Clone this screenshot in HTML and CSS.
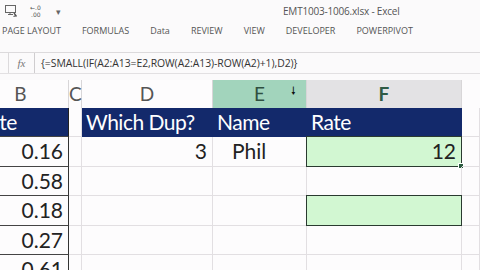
FILE: index.html
```html
<!DOCTYPE html>
<html lang="en">
<head>
  <meta charset="UTF-8" />
  <title>EMT1003-1006.xlsx - Excel</title>
  <link rel="stylesheet" href="styles.css">
</head>
<body>
  <div class="titlebar">
    <div class="quick">
      <svg class="qicon" width="16" height="14" viewBox="0 0 16 14">
        <rect x="1.5" y="1.5" width="10" height="7" fill="none" stroke="#666" stroke-width="1"/>
        <path d="M6 8.5v2M4 10.5h5" stroke="#666" stroke-width="1"/>
        <path d="M10 9l2.5 3.5M9.5 12.5l3-1" stroke="#555" stroke-width="1.3"/>
      </svg>
      <svg class="qicon" width="16" height="14" viewBox="0 0 16 14">
        <text x="2" y="6" font-size="6" font-family="DejaVu Sans" fill="#555">←.0</text>
        <text x="3" y="13" font-size="6" font-family="DejaVu Sans" fill="#555">.00</text>
      </svg>
      <span class="caret">▾</span>
    </div>
    <div class="title">EMT1003-1006.xlsx - Excel</div>
  </div>

  <div class="tabs">
    <span>PAGE LAYOUT</span>
    <span>FORMULAS</span>
    <span>Data</span>
    <span>REVIEW</span>
    <span>VIEW</span>
    <span>DEVELOPER</span>
    <span>POWERPIVOT</span>
  </div>

  <div class="formulabar">
    <div class="namebox"></div>
    <div class="fx">fx</div>
    <div class="formula">{=SMALL(IF(A2:A13=E2,ROW(A2:A13)-ROW(A2)+1),D2)}</div>
  </div>

  <div class="sheet">
    <div class="colhead">B</div>
    <div class="colhead">C</div>
    <div class="colhead">D</div>
    <div class="colhead active">E<span class="cursor">🠗</span></div>
    <div class="colhead sel">F</div>
    <div class="colhead last"></div>

    <div class="cell th tb">Rate</div>
    <div class="cell gap"></div>
    <div class="cell th">Which Dup?</div>
    <div class="cell th">Name</div>
    <div class="cell th">Rate</div>
    <div class="cell"></div>

    <div class="cell num tb">0.16</div>
    <div class="cell gap"></div>
    <div class="cell num">3</div>
    <div class="cell name">Phil</div>
    <div class="cell num green">12<span class="handle"></span></div>
    <div class="cell"></div>

    <div class="cell num tb">0.58</div>
    <div class="cell gap"></div>
    <div class="cell"></div>
    <div class="cell"></div>
    <div class="cell"></div>
    <div class="cell"></div>

    <div class="cell num tb">0.18</div>
    <div class="cell gap"></div>
    <div class="cell"></div>
    <div class="cell"></div>
    <div class="cell green"></div>
    <div class="cell"></div>

    <div class="cell num tb">0.27</div>
    <div class="cell gap"></div>
    <div class="cell"></div>
    <div class="cell"></div>
    <div class="cell"></div>
    <div class="cell"></div>

    <div class="cell num tb">0.61</div>
    <div class="cell gap"></div>
    <div class="cell"></div>
    <div class="cell"></div>
    <div class="cell"></div>
    <div class="cell"></div>
  </div>
</body>
</html>
```

FILE: styles.css
```css
body {
  margin: 0;
  width: 480px;
  height: 270px;
  overflow: hidden;
  background: #fbfafb;
  font-family: "Open Sans", sans-serif;
  color: #444;
}
.titlebar {
  height: 22px;
  display: flex;
  align-items: center;
}
.quick {
  display: flex;
  align-items: center;
  gap: 8px;
  padding-left: 4px;
  width: 279px;
}
.caret {
  font-size: 9px;
  color: #666;
  margin-left: 4px;
}
.title {
  font-size: 10px;
  color: #555;
  letter-spacing: -0.2px;
}
.tabs {
  height: 27px;
  padding-top: 3px;
  display: flex;
  align-items: flex-start;
  gap: 21px;
  padding-left: 2px;
  font-size: 9px;
  line-height: 12px;
  color: #555;
  border-bottom: 1px solid #dcdadc;
}
.formulabar {
  height: 20px;
  display: flex;
  align-items: stretch;
  border-bottom: 1px solid #e2e0e2;
}
.namebox {
  width: 8px;
  border-right: 1px solid #dcdadc;
}
.fx {
  width: 25px;
  font-family: "Liberation Serif", serif;
  font-style: italic;
  font-size: 11px;
  color: #777;
  text-align: center;
  line-height: 20px;
  border-right: 1px solid #cfcdcf;
}
.formula {
  padding-left: 6px;
  font-size: 10.4px;
  line-height: 20px;
  color: #333;
  white-space: nowrap;
  letter-spacing: -0.05px;
}
.sheet {
  margin-top: 6px;
  margin-left: -27px;
  display: grid;
  grid-template-columns: 96px 13px 131px 94px 155px 1fr;
  grid-template-rows: 28px 29px repeat(5, 29.5px);
  background: #fdfcfd;
  font-family: Lato, sans-serif;
  color: #222;
}
.colhead {
  font-size: 19px;
  color: #555;
  text-align: center;
  line-height: 28px;
  border-right: 1px solid #d8d6d8;
  position: relative;
}
.colhead.active {
  background: #a2d4bc;
  color: #2f4f40;
}
.colhead.sel {
  background: #e3e2e4;
  color: #2f5a44;
  font-weight: bold;
}
.colhead.last {
  border-right: none;
}
.cursor {
  position: absolute;
  right: 10px;
  top: -2px;
  font-size: 11px;
  color: #111;
  font-family: "DejaVu Sans", sans-serif;
}
.cell {
  border-right: 1px solid #e2dfe2;
  border-bottom: 1px solid #e2dfe2;
  font-size: 21px;
  line-height: 28px;
  padding: 0 5px;
  white-space: nowrap;
  overflow: hidden;
  position: relative;
}
.th {
  background: #13296b;
  color: #fff;
  border-bottom: none;
  border-right: 1px solid #13296b;
  padding-left: 4px;
  letter-spacing: -0.5px;
}
.th.tb {
  border-right: 1px solid #222;
}
.tb {
  border-right: 1px solid #333;
  border-bottom: 1px solid #444;
}
.gap {
  background: #fdfcfd;
}
.num {
  text-align: right;
}
.name {
  padding-left: 19px;
}
.green {
  background: #d2f7d2;
  border: 1px solid #2a3a30;
  margin: -1px 0 0 -1px;
  overflow: visible;
}
.handle {
  position: absolute;
  right: -3px;
  bottom: -3px;
  width: 4px;
  height: 4px;
  background: #2a5a40;
  border: 1px solid #fff;
}
```
